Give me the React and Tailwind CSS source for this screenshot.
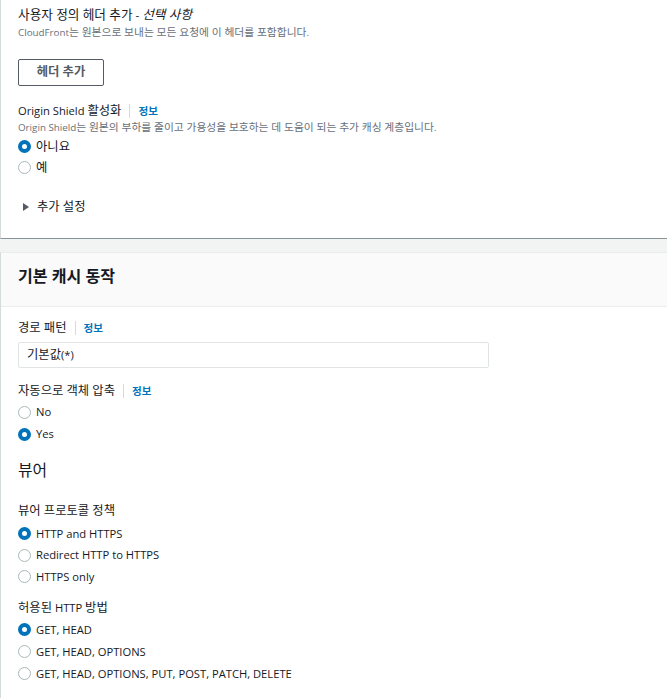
import React from "react";

const FONT = { fontFamily: '"Open Sans", "Noto Sans CJK KR", sans-serif' };

function K({ children }) {
  if (typeof children !== "string") return children;
  const parts = children.split(/([\uAC00-\uD7A3]+(?:\s+[\uAC00-\uD7A3]+)*)/);
  return parts.map((p, i) =>
    /[\uAC00-\uD7A3]/.test(p) ? (
      <span key={i} className="text-[1.1em]">{p}</span>
    ) : (
      <React.Fragment key={i}>{p}</React.Fragment>
    )
  );
}

function Radio({ checked, label, h = "h-[21px]" }) {
  return (
    <div className={`flex items-center ${h}`}>
      {checked ? (
        <span className="box-border w-[13px] h-[13px] rounded-full border-[4px] border-[#0073bb] bg-white shrink-0" />
      ) : (
        <span className="box-border w-[13px] h-[13px] rounded-full border-[1.5px] border-[#aab7b8] bg-white shrink-0" />
      )}
      <span className="ml-[5px] text-[11.2px] text-[#16191f] leading-[16px]"><K>{label}</K></span>
    </div>
  );
}

function Label({ text, info, className = "" }) {
  return (
    <div className={`flex items-center h-[16px] ${className}`}>
      <span className="text-[11.2px] leading-[16px] text-[#16191f]"><K>{text}</K></span>
      {info && (
        <>
          <span className="ml-[8px] mr-[8px] w-px h-[14px] bg-[#d5dbdb]" />
          <span className="text-[9.6px] font-bold text-[#0073bb] leading-[16px]"><K>정보</K></span>
        </>
      )}
    </div>
  );
}

export default function App() {
  return (
    <div style={FONT} className="w-[667px] h-[698px] bg-[#f2f3f3] overflow-hidden">
      {/* Top card */}
      <div className="bg-white border-l border-l-[#d5dbdb] border-b border-b-[#879596] pl-[17px] pt-[6px] pb-[23px]">
        <div className="h-[16px] leading-[16px] text-[11.5px] text-[#16191f] whitespace-nowrap">
          <K>사용자 정의 헤더 추가 - </K><i><K>선택 사항</K></i>
        </div>
        <div className="mt-[3px] h-[14px] leading-[14px] text-[9.8px] text-[#687078] whitespace-nowrap">
          <K>CloudFront는 원본으로 보내는 모든 요청에 이 헤더를 포함합니다.</K>
        </div>
        <div className="mt-[20px] box-border w-[86px] h-[27px] border border-[#545b64] rounded-[2px] flex items-center justify-center text-[11.2px] font-semibold text-[#545b64]">
          <K>헤더 추가</K>
        </div>
        <Label text="Origin Shield 활성화" info className="mt-[17px]" />
        <div className="mt-[1px] h-[14px] leading-[14px] text-[9.8px] text-[#687078] whitespace-nowrap">
          <K>Origin Shield는 원본의 부하를 줄이고 가용성을 보호하는 데 도움이 되는 추가 캐싱 계층입니다.</K>
        </div>
        <div className="mt-[2px]">
          <Radio checked label="아니요" />
          <Radio label="예" />
        </div>
        <div className="mt-[21px] h-[16px] flex items-center">
          <svg width="13" height="16" viewBox="0 0 13 16" className="shrink-0">
            <path d="M5 4 L11 8 L5 12 Z" fill="#545b64" />
          </svg>
          <span className="ml-[6px] text-[11.2px] leading-[16px] text-[#16191f]"><K>추가 설정</K></span>
        </div>
      </div>

      {/* Gap band */}
      <div className="h-[13px]" />

      {/* Second card */}
      <div className="bg-white border-l border-l-[#d5dbdb] border-t border-t-[#eaeded] h-[460px]">
        <div className="bg-[#fafafa] border-b border-b-[#eaeded] h-[54px] pl-[17px] pt-[13px]">
          <div className="h-[20px] leading-[20px] text-[14.6px] font-bold text-[#16191f]"><K>기본 캐시 동작</K></div>
        </div>
        <div className="pl-[17px] pt-[13px]">
          <Label text="경로 패턴" info />
          <div className="mt-[6px] box-border w-[471px] h-[26px] border border-[#e1e4e4] rounded-[2px] flex items-center pl-[8px] text-[11.2px] text-[#16191f]">
            <K>기본값(*)</K>
          </div>
          <Label text="자동으로 객체 압축" info className="mt-[15px]" />
          <div className="mt-[2px]">
            <Radio label="No" h="h-[22px]" />
            <Radio checked label="Yes" h="h-[22px]" />
          </div>
          <div className="mt-[15px] h-[20px] leading-[20px] text-[14.4px] text-[#16191f]"><K>뷰어</K></div>
          <Label text="뷰어 프로토콜 정책" className="mt-[23px]" />
          <div className="mt-[4px]">
            <Radio checked label="HTTP and HTTPS" h="h-[21.5px]" />
            <Radio label="Redirect HTTP to HTTPS" h="h-[21.5px]" />
            <Radio label="HTTPS only" h="h-[21.5px]" />
          </div>
          <Label text="허용된 HTTP 방법" className="mt-[12px]" />
          <div className="mt-[3px]">
            <Radio checked label="GET, HEAD" h="h-[22px]" />
            <Radio label="GET, HEAD, OPTIONS" h="h-[22px]" />
            <Radio label="GET, HEAD, OPTIONS, PUT, POST, PATCH, DELETE" h="h-[22px]" />
          </div>
        </div>
      </div>
    </div>
  );
}
